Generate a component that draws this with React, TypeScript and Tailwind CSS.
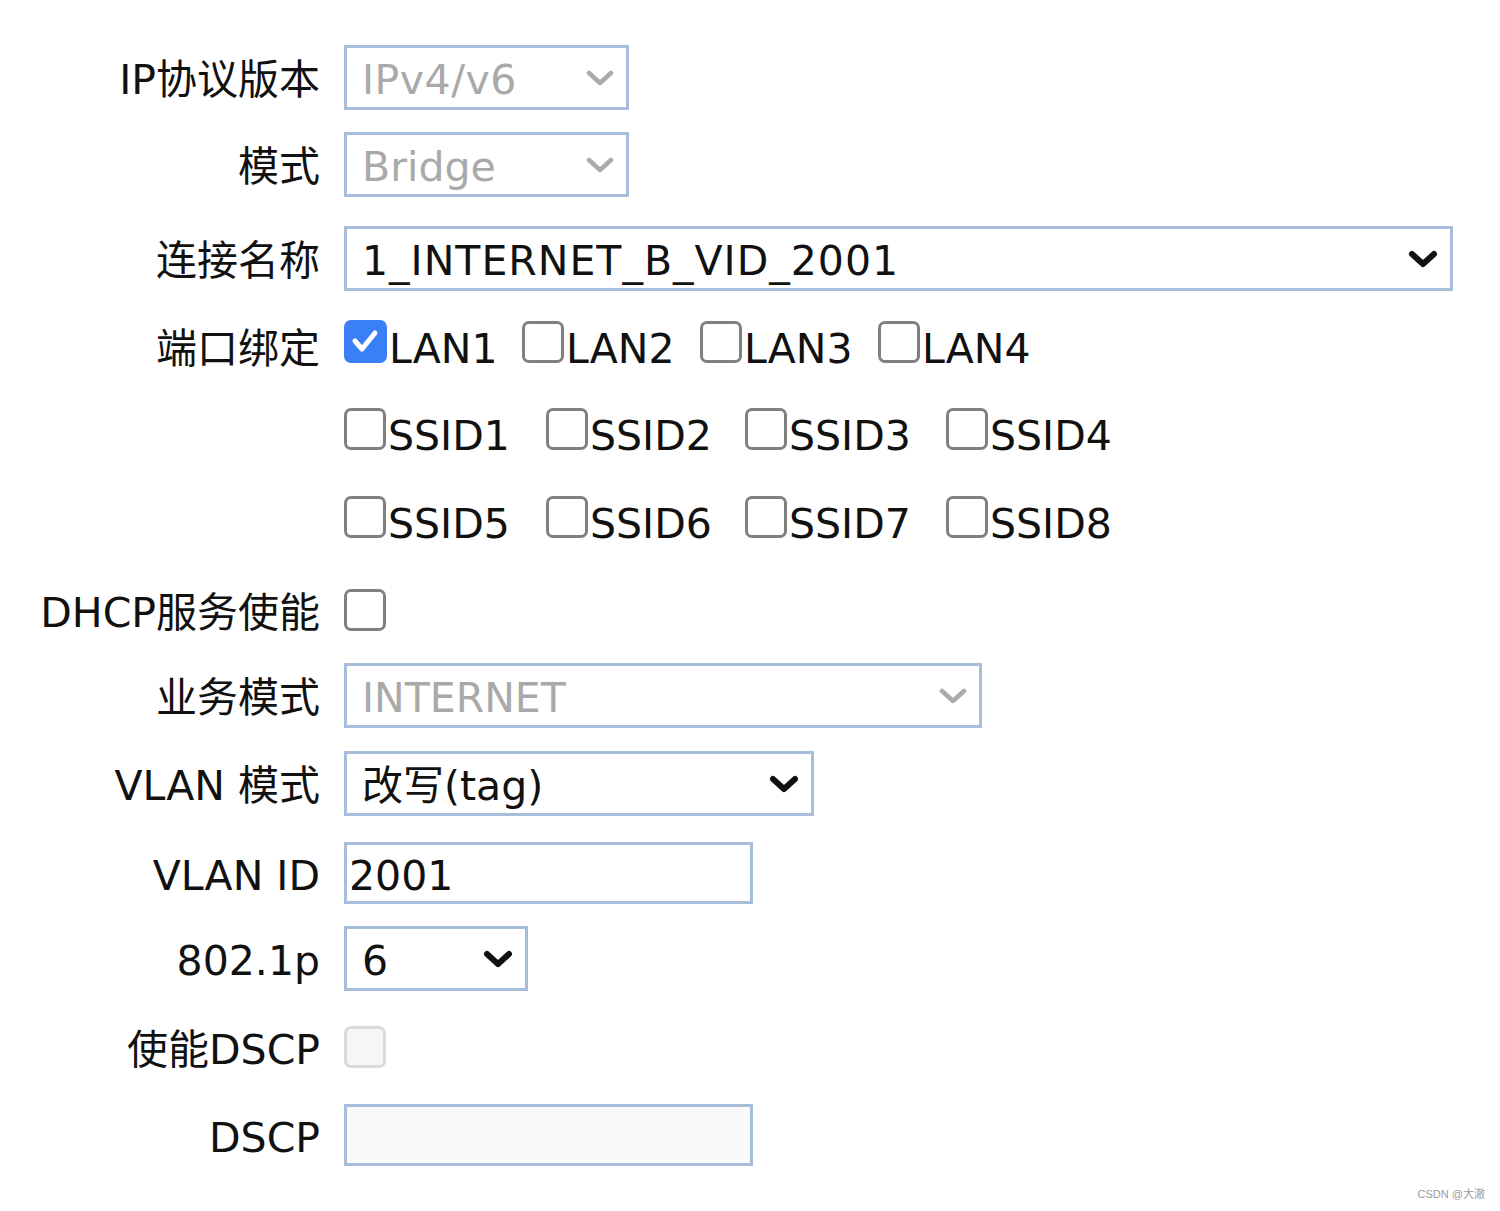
import React from 'react';

const font = { fontFamily: '"DejaVu Sans", "Noto Sans CJK SC", sans-serif' };

const Chevron: React.FC<{ disabled?: boolean }> = ({ disabled }) =>
  disabled ? (
    <svg width="28" height="16" viewBox="0 0 28 16" fill="none">
      <polyline points="3,3 14,13 25,3" stroke="#ababab" strokeWidth="4.5" strokeLinecap="round" strokeLinejoin="round" />
    </svg>
  ) : (
    <svg width="30" height="18" viewBox="0 0 30 18" fill="none">
      <polyline points="4,4 15,14 26,4" stroke="#111" strokeWidth="6" strokeLinecap="round" strokeLinejoin="round" />
    </svg>
  );

const Select: React.FC<{ value: string; width: string; disabled?: boolean; textClass?: string }> = ({
  value,
  width,
  disabled,
  textClass = '',
}) => (
  <div
    className={`${width} h-[65px] border-[3px] border-[#a7bdd9] bg-white flex items-center justify-between pl-[15px] pr-[12px] ${
      disabled ? 'text-[#a9a9a9]' : 'text-[#111]'
    }`}
  >
    <span className={`leading-none translate-y-[3px] ${textClass}`}>{value}</span>
    <Chevron disabled={disabled} />
  </div>
);

const Input: React.FC<{ value?: string; disabled?: boolean }> = ({ value, disabled }) => (
  <div
    className={`w-[409px] h-[62px] border-[3px] border-[#a7bdd9] flex items-center pl-[2px] ${
      disabled ? 'bg-[#fafafa]' : 'bg-white'
    }`}
  >
    <span className="leading-none translate-y-[3px] text-[#111]">{value}</span>
  </div>
);

const Box: React.FC<{ checked?: boolean; disabled?: boolean }> = ({ checked, disabled }) => {
  if (checked) {
    return (
      <span className="relative w-[43px] h-[43px] rounded-[7px] bg-[#3a7ff6] shrink-0">
        <svg className="absolute left-[6px] top-[8px]" width="30" height="26" viewBox="0 0 30 26" fill="none">
          <polyline points="5,13 12,21 25,5" stroke="#fff" strokeWidth="5" strokeLinecap="round" strokeLinejoin="round" />
        </svg>
      </span>
    );
  }
  return (
    <span
      className={`w-[42px] h-[42px] rounded-[7px] border-[3px] shrink-0 ${
        disabled ? 'border-[#dadada] bg-[#f6f6f6]' : 'border-[#808080] bg-white'
      }`}
    />
  );
};

const Label: React.FC<{ children?: React.ReactNode; shift?: boolean }> = ({ children, shift = true }) => (
  <div
    className={`w-[320px] shrink-0 text-right leading-none text-[#111] whitespace-nowrap ${
      shift ? 'translate-y-[3px]' : ''
    }`}
  >
    {children}
  </div>
);

const CheckItem: React.FC<{ label: string; width: string; checked?: boolean }> = ({ label, width, checked }) => (
  <div className={`${width} flex items-baseline`}>
    <Box checked={checked} />
    <span className="ml-[2px] leading-none text-[#111]">{label}</span>
  </div>
);

export default function App() {
  return (
    <div className="relative min-h-[1211px] bg-white text-[41px]" style={font}>
      <div className="pt-[45px] flex flex-col">
        <div className="flex items-center gap-[24px]">
          <Label>IP协议版本</Label>
          <Select value="IPv4/v6" width="w-[285px]" disabled textClass="tracking-[0.5px]" />
        </div>
        <div className="mt-[22px] flex items-center gap-[24px]">
          <Label>模式</Label>
          <Select value="Bridge" width="w-[285px]" disabled />
        </div>
        <div className="mt-[29px] flex items-center gap-[24px]">
          <Label>连接名称</Label>
          <Select value="1_INTERNET_B_VID_2001" width="w-[1109px]" textClass="tracking-[1px]" />
        </div>
        <div className="mt-[29px] h-[43px] flex items-baseline gap-[24px]">
          <Label shift={false}>端口绑定</Label>
          <div className="flex items-baseline">
            <CheckItem label="LAN1" width="w-[178px]" checked />
            <CheckItem label="LAN2" width="w-[178px]" />
            <CheckItem label="LAN3" width="w-[178px]" />
            <CheckItem label="LAN4" width="w-[178px]" />
          </div>
        </div>
        <div className="mt-[45px] h-[43px] flex items-baseline gap-[24px]">
          <Label shift={false} />
          <div className="flex items-baseline">
            <CheckItem label="SSID1" width="w-[202px]" />
            <CheckItem label="SSID2" width="w-[199px]" />
            <CheckItem label="SSID3" width="w-[201px]" />
            <CheckItem label="SSID4" width="w-[200px]" />
          </div>
        </div>
        <div className="mt-[45px] h-[43px] flex items-baseline gap-[24px]">
          <Label shift={false} />
          <div className="flex items-baseline">
            <CheckItem label="SSID5" width="w-[202px]" />
            <CheckItem label="SSID6" width="w-[199px]" />
            <CheckItem label="SSID7" width="w-[201px]" />
            <CheckItem label="SSID8" width="w-[200px]" />
          </div>
        </div>
        <div className="mt-[50px] flex items-center gap-[24px]">
          <Label>DHCP服务使能</Label>
          <Box />
        </div>
        <div className="mt-[32px] flex items-center gap-[24px]">
          <Label>业务模式</Label>
          <Select value="INTERNET" width="w-[638px]" disabled />
        </div>
        <div className="mt-[23px] flex items-center gap-[24px]">
          <Label>VLAN 模式</Label>
          <Select value="改写(tag)" width="w-[470px]" />
        </div>
        <div className="mt-[26px] flex items-center gap-[24px]">
          <Label>VLAN ID</Label>
          <Input value="2001" />
        </div>
        <div className="mt-[22px] flex items-center gap-[24px]">
          <Label>802.1p</Label>
          <Select value="6" width="w-[184px]" />
        </div>
        <div className="mt-[35px] flex items-center gap-[24px]">
          <Label>使能DSCP</Label>
          <Box disabled />
        </div>
        <div className="mt-[36px] flex items-center gap-[24px]">
          <Label>DSCP</Label>
          <Input disabled />
        </div>
      </div>
      <div
        className="absolute right-[15px] top-[1189px] text-[11px] text-[#9a9a9a] leading-none"
        style={{ fontFamily: '"Liberation Sans", "Noto Sans CJK SC", sans-serif' }}
      >
        CSDN @大澈
      </div>
    </div>
  );
}
